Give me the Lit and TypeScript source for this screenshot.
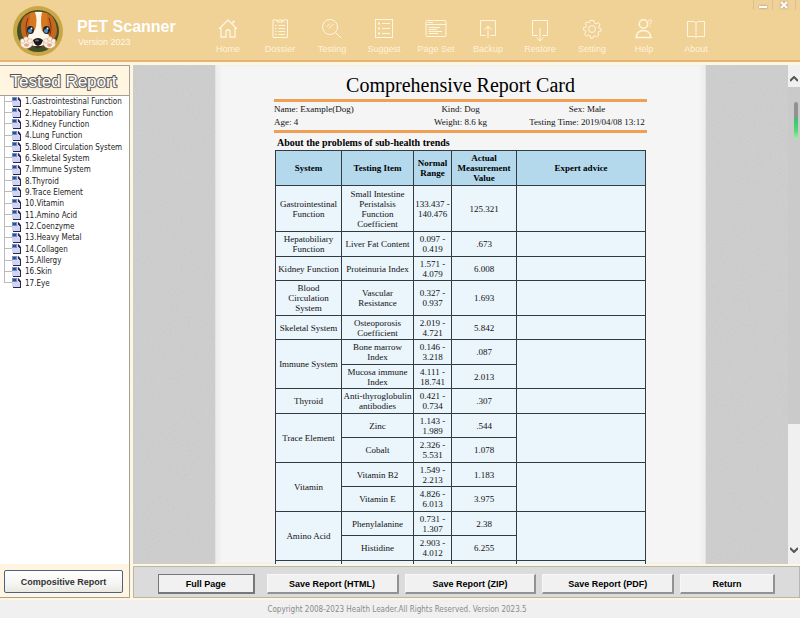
import { LitElement, html, css, svg } from "lit";
import { customElement, property } from "lit/decorators.js";

const navItems = [
  { label: "Home", icon: svg`<path stroke-width="1.300" d="M2 12 L11 3 L20 12 M4 10.500 V20 H9 V14 Q11 11.500 13 14 V20 H18 V10.500 M16 6.500 V4.500 H18" />` },
  { label: "Dossier", icon: svg`<path d="M8 3 H4 V20.500 H18.500 V3 H14 M8 5 V3.500 H10 L11 2 L12 3.500 H14 V5 Z M9.500 8.500 H16 M9.500 11.500 H16 M9.500 14.500 H16 M9.500 17.500 H16 M6 8.500 H7.500 M6 11.500 H7.500 M6 14.500 H7.500 M6 17.500 H7.500" />` },
  { label: "Testing", icon: svg`<circle cx="9" cy="10" r="7.500" /><path d="M14.500 15.500 L20 21 M5.500 10 L9 6.500 M8 11.500 L12.500 7" />` },
  { label: "Suggest", icon: svg`<rect x="2.500" y="2.500" width="17" height="18" /><path d="M9 6.500 H17 M9 11.500 H17 M9 16.500 H17" /><path stroke-width="2" d="M5 6.500 H7 M5 11.500 H7 M5 16.500 H7" />` },
  { label: "Page Set", icon: svg`<rect x="1" y="3.500" width="20" height="16" rx="1" /><path d="M1 7.500 H21 M3 5.500 H8 M3.500 10.500 H15 M3.500 12.500 H12 M3.500 14.500 H17 M3.500 16.500 H13" />` },
  { label: "Backup", icon: svg`<path d="M8.500 18.500 H3.500 V3.500 H18.500 V18.500 H13.500 M11 21.500 V9 M7.500 12.500 L11 9 L14.500 12.500" />` },
  { label: "Restore", icon: svg`<path d="M8.500 18.500 H3.500 V3.500 H18.500 V18.500 H13.500 M11 11 V23.500 M7.500 20.500 L11 24 L14.500 20.500" />` },
  { label: "Setting", icon: svg`<circle cx="11" cy="12" r="3.500" /><path d="M9 3.500 H13 L13.500 6 L15 6.800 L17.300 5.500 L19 8 L17.600 9.800 L18 11 L20 11.700 V14 L17.500 14.500 L17 16 L18 18 L15.500 20 L13.800 18.500 L12.500 19 L12 21 H9.500 L9 18.500 L7.500 18 L5.500 19.300 L3.500 17 L5 15 L4.500 13.500 L2.500 13 V10.500 L5 10 L5.500 8.500 L4 6.500 L6 4.800 L8 6 Z" />` },
  { label: "Help", icon: svg`<circle cx="10.500" cy="7" r="4.200" stroke-width="1.500" /><path stroke-width="1.500" d="M3 20.500 Q4 13.500 10.500 13.500 Q17 13.500 18 20.500 Z" /><path d="M15.500 4.500 Q15.500 2.800 17 2.800 Q18.800 2.800 18.500 4.700 Q18.300 5.500 17 6.500 V7.500 M17 9 V10" />` },
  { label: "About", icon: svg`<path d="M11 6 L9.500 4.500 H2.500 V19.500 H9.500 L11 21 L12.500 19.500 H19.500 V4.500 H12.500 Z M11 6 V20" />` },
];

const treeItems = [
  "Gastrointestinal Function", "Hepatobiliary Function", "Kidney Function", "Lung Function",
  "Blood Circulation System", "Skeletal System", "Immune System", "Thyroid", "Trace Element",
  "Vitamin", "Amino Acid", "Coenzyme", "Heavy Metal", "Collagen", "Allergy", "Skin", "Eye",
];

interface Test { item: string; range: string; value: string }
const systems: { name: string; tests: Test[] }[] = [
  { name: "Gastrointestinal\nFunction", tests: [{ item: "Small Intestine\nPeristalsis\nFunction\nCoefficient", range: "133.437 -\n140.476", value: "125.321" }] },
  { name: "Hepatobiliary\nFunction", tests: [{ item: "Liver Fat Content", range: "0.097 -\n0.419", value: ".673" }] },
  { name: "Kidney Function", tests: [{ item: "Proteinuria Index", range: "1.571 -\n4.079", value: "6.008" }] },
  { name: "Blood\nCirculation\nSystem", tests: [{ item: "Vascular\nResistance", range: "0.327 -\n0.937", value: "1.693" }] },
  { name: "Skeletal System", tests: [{ item: "Osteoporosis\nCoefficient", range: "2.019 -\n4.721", value: "5.842" }] },
  { name: "Immune System", tests: [
    { item: "Bone marrow\nIndex", range: "0.146 -\n3.218", value: ".087" },
    { item: "Mucosa immune\nIndex", range: "4.111 -\n18.741", value: "2.013" }] },
  { name: "Thyroid", tests: [{ item: "Anti-thyroglobulin\nantibodies", range: "0.421 -\n0.734", value: ".307" }] },
  { name: "Trace Element", tests: [
    { item: "Zinc", range: "1.143 -\n1.989", value: ".544" },
    { item: "Cobalt", range: "2.326 -\n5.531", value: "1.078" }] },
  { name: "Vitamin", tests: [
    { item: "Vitamin B2", range: "1.549 -\n2.213", value: "1.183" },
    { item: "Vitamin E", range: "4.826 -\n6.013", value: "3.975" }] },
  { name: "Amino Acid", tests: [
    { item: "Phenylalanine", range: "0.731 -\n1.307", value: "2.38" },
    { item: "Histidine", range: "2.903 -\n4.012", value: "6.255" }] },
  { name: "", tests: [{ item: "", range: "", value: "" }] },
];

@customElement("pet-header")
class PetHeader extends LitElement {
  static styles = css`
    :host { display: flex; height: 60px; flex: none; position: relative; background: #f0d196; border-bottom: 2px solid #e4b574; font-family: "Liberation Sans", Arial, sans-serif; color: #fff; }
    .brand { display: flex; width: 202px; flex: none; padding: 5px 0 0 12px; box-sizing: border-box; gap: 13px; }
    .logo { width: 52px; height: 52px; flex: none; }
    .title { font-size: 16px; line-height: 20px; margin: 12px 0 0; font-weight: bold; white-space: nowrap; }
    .version { font-size: 9px; line-height: 10px; margin: 0 0 0 1px; color: #fff8e8; }
    nav { display: flex; padding-top: 17px; }
    .item { width: 52px; border: 0; padding: 0; background: none; color: #fff3da; font: 9px/10px "Liberation Sans", Arial, sans-serif; display: flex; flex-direction: column; align-items: center; gap: 2px; white-space: nowrap; }
    .item svg { width: 22px; height: 25px; fill: none; stroke: #fff6e2; overflow: visible; }
    .controls { position: absolute; right: 4px; top: 0; display: flex; }
    .control { height: 10px; width: 19px; padding: 0; background: #efd19a; border: solid #dfc08a; border-width: 0 0 0 1px; display: grid; place-items: center; }
    .close { width: 24px; border-right-width: 1px; }
    .control svg { width: 8px; height: 8px; stroke: #fff; stroke-width: 2; filter: drop-shadow(0 0 1px #9a8560); }
  `;
  render() {
    return html`
      <div class="brand">
        <svg class="logo" viewBox="0 0 52 52" aria-hidden="true">
          <circle cx="26" cy="26" r="25" fill="#c8a846" />
          <circle cx="26" cy="26" r="21" fill="#424f25" />
          <path d="M18 8 Q26 5 35 8 L41 20 L40 38 L26 42 L13 38 L12 19Z" fill="#d87920" />
          <path d="M18 8 Q8 12 9 24 Q9 33 15 36 L17 25Z M35 8 Q44 12 45 25 Q45 34 38 36 L36 24Z" fill="#c5671f" />
          <path d="M16 13 Q12 23 16 33 M37 13 Q41 23 37 33" fill="none" stroke="#753514" />
          <path d="M23 7 H30 Q28 16 30 26 Q40 29 38 38 L28 41 H22 L15 38 Q14 29 23 25 Q26 16 23 7Z" fill="#fff7ea" />
          <ellipse cx="18.500" cy="25" rx="3.500" ry="4" fill="#241e25" />
          <ellipse cx="34.500" cy="25" rx="3.500" ry="4" fill="#241e25" />
          <circle cx="18" cy="26" r="2" fill="#4a99cf" /><circle cx="34" cy="26" r="2" fill="#4a99cf" />
          <circle cx="19.500" cy="23.500" r="1" fill="#fff" /><circle cx="35.500" cy="23.500" r="1" fill="#fff" />
          <path d="M21 35 Q26 31 31 35 Q30 40 26 41 Q22 40 21 35Z" fill="#17181b" />
          <ellipse cx="25" cy="35.500" rx="2" ry="1" fill="#777" />
          <path d="M22 41 Q26 46 30 41" fill="#4a2922" />
          <g fill="#fff2e4" stroke="#c99d7e" stroke-width="0.500">
            <ellipse cx="14.500" cy="38.500" rx="6" ry="5" /><ellipse cx="37.500" cy="38.500" rx="6" ry="5" />
            <circle cx="10.500" cy="36" r="2.300" /><circle cx="14" cy="34" r="2.300" /><circle cx="18" cy="36" r="2.300" />
            <circle cx="34" cy="36" r="2.300" /><circle cx="38" cy="34" r="2.300" /><circle cx="41.500" cy="36" r="2.300" />
          </g>
          <g fill="#e6a58c"><ellipse cx="14.500" cy="40" rx="2.500" ry="1.800" /><ellipse cx="37.500" cy="40" rx="2.500" ry="1.800" /></g>
        </svg>
        <div><h1 class="title">PET Scanner</h1><p class="version">Version 2023</p></div>
      </div>
      <nav>
        ${navItems.map((n) => html`<button class="item"><svg viewBox="0 0 22 25" aria-hidden="true">${n.icon}</svg>${n.label}</button>`)}
      </nav>
      <div class="controls">
        <button class="control" aria-label="Minimize"><svg viewBox="0 0 8 8"><path d="M0 6 H8" /></svg></button>
        <button class="control close" aria-label="Close"><svg viewBox="0 0 8 8"><path d="M1 1 L7 7 M7 1 L1 7" /></svg></button>
      </div>`;
  }
}

@customElement("report-tree")
class ReportTree extends LitElement {
  static styles = css`
    :host { display: flex; flex-direction: column; width: 130px; flex: none; box-sizing: border-box; border: solid #a3a095; border-width: 1px 1px 1px 0; background: #fff5e0; }
    h2 { margin: 0; height: 29px; line-height: 31px; text-align: center; font-family: "Liberation Sans", Arial, sans-serif; font-size: 17px; font-weight: normal; color: #fff; -webkit-text-stroke: 2px #55524e; paint-order: stroke fill; text-shadow: 1px 1px 1px #888; border-bottom: 1px solid #a3a095; padding-right: 2px; white-space: nowrap; }
    .pane { flex: 1; min-height: 0; overflow: hidden; background: #fff; }
    ul { list-style: none; margin: 0; padding: 0 0 0 4px; height: 193px; display: grid; grid-auto-rows: 1fr; }
    li { display: flex; align-items: stretch; }
    .branch { width: 8px; display: grid; grid-template-rows: 1fr 1fr; flex: none; }
    .branch::before { content: ""; border: solid #bbb; border-width: 0 0 1px 1px; }
    .branch::after { content: ""; border-left: 1px solid #bbb; }
    li:last-child .branch::after { border: 0; }
    .link { display: flex; align-items: center; gap: 4px; color: #222; text-decoration: none; white-space: nowrap; font: 8px/11px "DejaVu Sans Condensed", "Noto Sans", sans-serif; }
    .page { width: 9px; height: 10px; }
    .foot { height: 33px; flex: none; padding: 6px 6px 4px 4px; box-sizing: border-box; display: flex; }
    .all { flex: 1; border: 1px solid #4d5f86; border-radius: 2px; padding: 0; background: linear-gradient(#fff, #f5f5f2 60%, #e9e8e2); color: #333; font: bold 9px/12px "Liberation Sans", Arial, sans-serif; white-space: nowrap; }
  `;
  render() {
    return html`
      <h2>Tested Report</h2>
      <div class="pane">
        <ul>
          ${treeItems.map((t, i) => html`<li><span class="branch"></span><a class="link" href="#"><svg class="page" viewBox="0 0 9 10" aria-hidden="true"><path d="M0 0 H6 L9 3 V10 H1 V9 H0Z" fill="#26264d" /><path d="M0 0 H6 V3 H8 V9 H0Z" fill="#d3d4f3" /><path d="M0 0 H5 V4 H0Z" fill="#6f8fc4" /><path d="M1 1 H4 V3 H1Z" fill="#2e4f86" /><path d="M6 0 L8 2 V4 H7 V1 H6Z" fill="#26264d" /></svg>${i + 1}.${t}</a></li>`)}
        </ul>
      </div>
      <div class="foot"><button class="all">Compositive Report</button></div>`;
  }
}

@customElement("report-sheet")
class ReportSheet extends LitElement {
  static styles = css`
    :host { display: grid; grid-template-columns: 82px minmax(0, 1fr) 82px 12px; grid-template-rows: minmax(0, 1fr); flex: 1; min-height: 0; overflow: hidden; background: #f5f5f5; font-family: "Liberation Serif", "Times New Roman", serif; color: #111; }
    .gutter { background: #cecece; min-width: 0; overflow: hidden; }
    .gutter svg { width: 100%; height: 100%; display: block; opacity: 0.12; }
    .paper { padding: 8px 58px 0; overflow: hidden; background: #f5f5f5; border: solid #e4e4e4; border-width: 0 1px; margin: 0; box-shadow: inset 4px 0 3px #eee, inset -4px 0 3px #eee; box-sizing: border-box; }
    h2 { margin: 0 0 2px; font-size: 20px; line-height: 24px; font-weight: normal; text-align: center; white-space: nowrap; color: #000; }
    .info { display: grid; grid-template-columns: 120px 1fr 120px; font-size: 9px; line-height: 13px; border: solid #f0a055; border-width: 3px 0; padding: 1px 0; text-align: center; white-space: nowrap; }
    .start { text-align: left; }
    h3 { margin: 4px 0 1px 3px; font-size: 10px; line-height: 12px; color: #000; }
    .results { padding: 0 1px; }
    table { width: 100%; border-collapse: collapse; table-layout: fixed; font-size: 9px; line-height: 10px; text-align: center; white-space: pre-line; background: #ebf5fc; }
    th, td { border: 1px solid #333b40; padding: 0; vertical-align: middle; font-weight: normal; }
    thead th { background: #b4d9ec; font-weight: bold; height: 34px; color: #000; }
    tbody tr { height: 25px; }
    tbody tr:nth-child(odd) { height: 24px; }
    tbody tr:nth-child(4) { height: 35px; }
    tbody tr:first-child { height: 46px; }
    .system { width: 66px; } .item { width: 72px; } .range { width: 38px; } .value { width: 65px; }
    .scroll { background: #f0f0f0; display: flex; flex-direction: column; }
    .arrow { height: 22px; border: 0; padding: 6px 0 0; flex: none; background: none; display: grid; place-items: center; }
    .down { padding: 0 0 6px; }
    .arrow svg { width: 8px; height: 6px; fill: none; stroke: #555; stroke-width: 2; }
    .track { flex: 1; }
    .thumb { height: 74%; background: #cacaca; padding: 15px 2px 0 0; box-sizing: border-box; display: flex; justify-content: flex-end; }
    .mark { width: 4px; height: 37px; border-radius: 2px; background: linear-gradient(#929292 16px, #35c46f 16px, #55d477 28px, #a2eda0); }
  `;
  private noise() {
    return html`<div class="gutter"><svg aria-hidden="true"><filter id="grain"><feTurbulence type="fractalNoise" baseFrequency="0.6" numOctaves="2" /><feColorMatrix type="saturate" values="0" /></filter><rect width="100%" height="100%" filter="url(#grain)" /></svg></div>`;
  }
  render() {
    return html`
      ${this.noise()}
      <article class="paper">
        <h2>Comprehensive Report Card</h2>
        <div class="info">
          <span class="start">Name: Example(Dog)</span><span>Kind: Dog</span><span>Sex: Male</span>
          <span class="start">Age: 4</span><span>Weight: 8.6 kg</span><span>Testing Time: 2019/04/08 13:12</span>
        </div>
        <h3>About the problems of sub-health trends</h3>
        <div class="results">
          <table>
            <colgroup><col class="system" /><col class="item" /><col class="range" /><col class="value" /><col /></colgroup>
            <thead><tr><th>System</th><th>Testing Item</th><th>${"Normal\nRange"}</th><th>${"Actual\nMeasurement\nValue"}</th><th>Expert advice</th></tr></thead>
            <tbody>
              ${systems.flatMap((s) => s.tests.map((t, i) => html`<tr>${i === 0 ? html`<th rowspan=${s.tests.length}>${s.name}</th>` : ""}<td>${t.item}</td><td>${t.range}</td><td>${t.value}</td>${i === 0 ? html`<td rowspan=${s.tests.length}></td>` : ""}</tr>`))}
            </tbody>
          </table>
        </div>
      </article>
      ${this.noise()}
      <div class="scroll">
        <button class="arrow" aria-label="Scroll up"><svg viewBox="0 0 8 6"><path d="M0 5 L4 1 L8 5" /></svg></button>
        <div class="track"><div class="thumb"><div class="mark"></div></div></div>
        <button class="arrow down" aria-label="Scroll down"><svg viewBox="0 0 8 6"><path d="M0 1 L4 5 L8 1" /></svg></button>
      </div>`;
  }
}

@customElement("action-bar")
class ActionBar extends LitElement {
  @property({ attribute: false }) exports = ["Save Report (HTML)", "Save Report (ZIP)", "Save Report (PDF)"];
  static styles = css`
    :host { display: flex; gap: 12px; height: 32px; flex: none; box-sizing: border-box; padding: 7px 24px 4px; background: #dbdbdb; border: 1px solid #b9b6ad; }
    .group { flex: 510; display: flex; gap: 6px; min-width: 0; }
    button { flex: 94; min-width: 0; height: 20px; padding: 0; background: #f1f1f1; color: #000; border: solid #f8f8f8; border-width: 1px; border-right: 2px solid #929292; border-bottom: 2px solid #929292; font: bold 9px/12px "Liberation Sans", Arial, sans-serif; white-space: nowrap; }
    .save { flex: 132; }
    .main { border-color: #777; }
  `;
  render() {
    return html`<button class="main">Full Page</button>
      <div class="group">${this.exports.map((e) => html`<button class="save">${e}</button>`)}<button>Return</button></div>`;
  }
}

@customElement("app-root")
class AppRoot extends LitElement {
  static styles = css`
    :host { display: flex; flex-direction: column; height: 100vh; overflow: hidden; background: #fff6df; }
    .body { flex: 1; min-height: 0; display: flex; gap: 3px; padding: 3px 0 2px; }
    main { flex: 1; min-width: 0; display: flex; flex-direction: column; gap: 2px; }
    footer { height: 18px; flex: none; background: #f0f0f0; color: #8a8a8a; text-align: center; font: 8px/20px "DejaVu Sans Condensed", "Noto Sans", sans-serif; padding-right: 6px; white-space: nowrap; }
  `;
  render() {
    return html`
      <pet-header></pet-header>
      <div class="body">
        <report-tree></report-tree>
        <main><report-sheet></report-sheet><action-bar></action-bar></main>
      </div>
      <footer>Copyright 2008-2023 Health Leader.All Rights Reserved. Version 2023.5</footer>`;
  }
}
